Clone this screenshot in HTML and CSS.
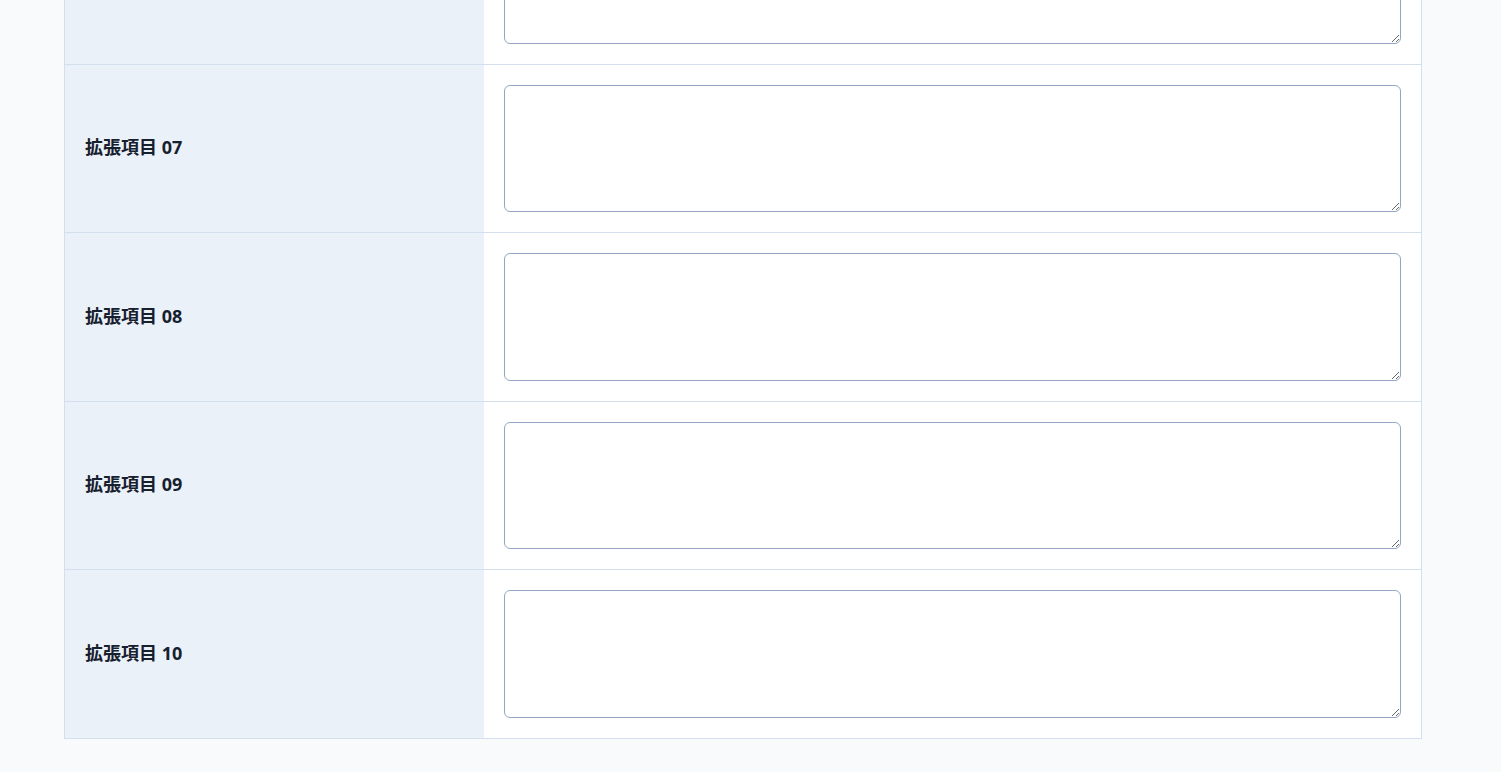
FILE: index.html
```html
<!DOCTYPE html>
<html lang="ja">
<head>
  <meta charset="UTF-8" />
  <meta name="viewport" content="width=device-width, initial-scale=1.0"/>
  <title>拡張項目</title>
  <link rel="stylesheet" href="styles.css">
</head>
<body>
  <div class="form-table">
    <div class="form-row">
      <div class="form-label">拡張項目 06</div>
      <div class="form-field"><textarea class="field-input"></textarea></div>
    </div>
    <div class="form-row">
      <div class="form-label">拡張項目 07</div>
      <div class="form-field"><textarea class="field-input"></textarea></div>
    </div>
    <div class="form-row">
      <div class="form-label">拡張項目 08</div>
      <div class="form-field"><textarea class="field-input"></textarea></div>
    </div>
    <div class="form-row">
      <div class="form-label">拡張項目 09</div>
      <div class="form-field"><textarea class="field-input"></textarea></div>
    </div>
    <div class="form-row">
      <div class="form-label">拡張項目 10</div>
      <div class="form-field"><textarea class="field-input"></textarea></div>
    </div>
  </div>
</body>
</html>
```

FILE: styles.css
```css
body {
  margin: 0;
  background: #f8fafc;
  font-family: "Noto Sans", "Noto Sans CJK JP", sans-serif;
  color: #16202e;
}

.form-table {
  width: 1356px;
  margin: -105px 0 33px 64px;
  border: 1px solid #d3dfec;
  background: #ffffff;
}

.form-row {
  display: grid;
  grid-template-columns: 419px 1fr;
  border-top: 1px solid #d3dfec;
}

.form-row:first-child {
  border-top: none;
}

.form-label {
  display: flex;
  align-items: center;
  padding: 0 20px;
  background: #ebf1f8;
  font-size: 18px;
  font-weight: 700;
  line-height: 1.2;
}

.form-field {
  padding: 20px;
}

.field-input {
  display: block;
  box-sizing: border-box;
  width: 100%;
  height: 127.5px;
  border: 1px solid #94a6c4;
  border-radius: 6px;
  background: #ffffff;
  font-family: inherit;
  font-size: 14px;
  resize: vertical;
}
```
